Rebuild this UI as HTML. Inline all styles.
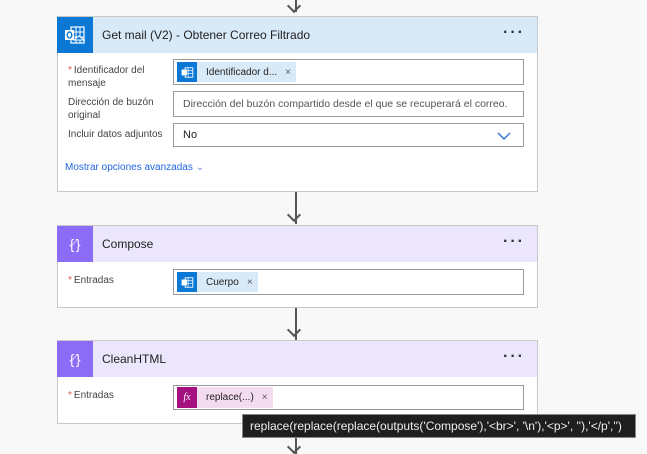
<!DOCTYPE html>
<html><head><meta charset="utf-8"><style>
*{box-sizing:border-box;margin:0;padding:0}
body{width:647px;height:454px;background:#f8f8f8;font-family:"Liberation Sans",sans-serif;position:relative;overflow:hidden;color:#333}
.card{position:absolute;left:57px;width:481px;background:#fff;border:1px solid #c8c8c8}
.hdr{height:36px;position:relative;display:flex;align-items:center}
.ico{width:36px;height:36px;display:flex;align-items:center;justify-content:center;margin-left:-1px;margin-top:-1px}
.title{margin-left:9px;font-size:12px;color:#222}
.dots{position:absolute;right:12px;top:7px;font-size:16px;font-weight:bold;letter-spacing:2px;color:#333}
.lbl{position:absolute;left:10px;font-size:10px;color:#444;line-height:13px}
.lbl b{color:#e05a4a;font-weight:normal;margin-right:2px}
.inp{position:absolute;left:115px;width:351px;border:1px solid #999;background:#fff;font-size:10px;display:flex;align-items:center}
.tok{display:flex;align-items:center;height:100%;font-size:10px;color:#222}
.tok .ti{width:20px;height:100%;display:flex;align-items:center;justify-content:center}
.arrow{position:absolute;left:295px;width:2px;background:#555}
.ah{position:absolute;left:289px;width:10px;height:10px;border-right:2px solid #555;border-bottom:2px solid #555;transform:rotate(45deg)}
.tip{position:absolute;left:242px;top:414px;width:394px;height:24px;background:#1f1f1f;border:1px solid #888;color:#eee;font-size:12px;line-height:22px;padding-left:7px;white-space:nowrap}
</style></head><body>
<div class="arrow" style="top:0;height:12px"></div><div class="ah" style="top:1px"></div>

<div class="card" style="top:16px;height:176px">
 <div class="hdr" style="background:#d8e9f8">
  <div class="ico" style="background:#0a78d4"><svg width="22" height="18" viewBox="0 0 22 18"><rect x="7" y="1" width="13" height="16" fill="none" stroke="#fff" stroke-width="1.2"/><path d="M7 6h13M7 11h13M12 1v16M16 1v16" stroke="#fff" stroke-width="1"/><rect x="1" y="4" width="9" height="10" fill="#fff"/><ellipse cx="5.5" cy="9" rx="2.3" ry="3" fill="none" stroke="#0a78d4" stroke-width="1.4"/><path d="M10 14l5-4 5 4z" fill="#0a78d4" stroke="#fff"/></svg></div>
  <div class="title">Get mail (V2) - Obtener Correo Filtrado</div><div class="dots">···</div>
 </div>
 <div class="lbl" style="top:47px"><b>*</b>Identificador del<br>mensaje</div>
 <div class="inp" style="top:42px;height:26px;padding:2px 3px"><div class="tok" style="background:#d8e9f8"><div class="ti" style="background:#0a78d4"><svg width="13" height="11" viewBox="0 0 22 18"><rect x="7" y="1" width="13" height="16" fill="none" stroke="#fff" stroke-width="1.5"/><path d="M7 6h13M7 11h13M12 1v16" stroke="#fff" stroke-width="1.2"/><rect x="1" y="4" width="9" height="10" fill="#fff"/></svg></div><span style="margin:0 8px 0 9px">Identificador d...</span><span style="color:#555;margin-right:5px">×</span></div></div>
 <div class="lbl" style="top:79px">Dirección de buzón<br>original</div>
 <div class="inp" style="top:74px;height:26px;padding-left:9px;color:#555;font-size:10.5px">Dirección del buzón compartido desde el que se recuperará el correo.</div>
 <div class="lbl" style="top:111px">Incluir datos adjuntos</div>
 <div class="inp" style="top:106px;height:24px;padding-left:9px;color:#222;font-size:11px">No<svg style="position:absolute;right:12px;top:8px" width="14" height="8"><path d="M1 1l6 6 6-6" fill="none" stroke="#2266e3" stroke-width="1.3"/></svg></div>
 <div style="position:absolute;left:7px;top:145px;font-size:10px;color:#2266e3">Mostrar opciones avanzadas <span style="color:#6a8fd8">&#8964;</span></div>
</div>

<div class="arrow" style="top:192px;height:32px"></div><div class="ah" style="top:210px"></div>

<div class="card" style="top:225px;height:83px">
 <div class="hdr" style="background:#ece6fc">
  <div class="ico" style="background:#8b6cf7;color:#fff;font-size:14px">{<span style="font-size:10px;font-style:italic">∕</span>}</div>
  <div class="title">Compose</div><div class="dots">···</div>
 </div>
 <div class="lbl" style="top:48px"><b>*</b>Entradas</div>
 <div class="inp" style="top:43px;height:26px;padding:2px 3px"><div class="tok" style="background:#d8e9f8"><div class="ti" style="background:#0a78d4"><svg width="13" height="11" viewBox="0 0 22 18"><rect x="7" y="1" width="13" height="16" fill="none" stroke="#fff" stroke-width="1.5"/><path d="M7 6h13M7 11h13M12 1v16" stroke="#fff" stroke-width="1.2"/><rect x="1" y="4" width="9" height="10" fill="#fff"/></svg></div><span style="margin:0 8px 0 9px">Cuerpo</span><span style="color:#555;margin-right:5px">×</span></div></div>
</div>

<div class="arrow" style="top:308px;height:32px"></div><div class="ah" style="top:325px"></div>

<div class="card" style="top:340px;height:84px">
 <div class="hdr" style="background:#ece6fc">
  <div class="ico" style="background:#8b6cf7;color:#fff;font-size:14px">{<span style="font-size:10px;font-style:italic">∕</span>}</div>
  <div class="title">CleanHTML</div><div class="dots">···</div>
 </div>
 <div class="lbl" style="top:48px"><b>*</b>Entradas</div>
 <div class="inp" style="top:44px;height:25px;padding:1px 3px"><div class="tok" style="background:#f3dcef"><div class="ti" style="background:#a4107f;color:#fff;font-size:10px;font-style:italic;font-family:'Liberation Serif',serif">fx</div><span style="margin:0 8px 0 9px">replace(...)</span><span style="color:#555;margin-right:5px">×</span></div></div>
</div>

<div class="arrow" style="top:424px;height:30px"></div><div class="ah" style="top:442px"></div>
<div class="tip">replace(replace(replace(outputs('Compose'),'&lt;br&gt;', '\n'),'&lt;p&gt;', ''),'&lt;/p','')</div>
</body></html>
